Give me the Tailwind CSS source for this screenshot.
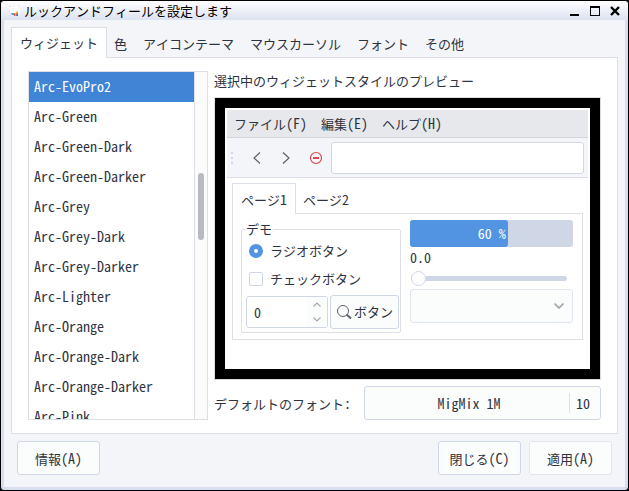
<!DOCTYPE html>
<html lang="ja">
  <head>
    <meta charset="utf-8">
    <title>ルックアンドフィールを設定します</title>
    <!-- Tailwind CSS -->
    <script src="https://cdn.jsdelivr.net/npm/@tailwindcss/browser@4"></script>
  </head>
  <body class="bg-black font-['Noto_Sans_Mono_CJK_JP','Noto_Sans_CJK_JP',monospace] text-[13px] leading-5 text-[#2e3340]">
    <!-- Window -->
    <div class="min-h-screen border border-black bg-[#d9dff1] rounded-sm flex flex-col px-[3px] pb-[3px]">
      <!-- Title bar -->
      <header class="-mx-[3px] h-[19px] pl-2 pr-2 flex items-center rounded-t-sm bg-linear-to-b from-white to-[#dde2f2] text-black">
        <svg class="size-3 mr-[3px]" viewBox="0 0 12 12" aria-hidden="true">
          <path d="M0 1h11v5q0 4-3 5H4Q0 8 0 1z" fill="#fff"/>
          <path d="M0 1h2v1H0zM4 1h1v1H4zM9 1h2v1H9zM0 5h1v2H0z" fill="#e9e4d8"/>
          <path d="M2 8h3l-1 2H3z" fill="#38a5e8"/>
          <path d="M4 9l2-1 1 2-2 1z" fill="#d9482f"/>
          <path d="M6 9l2-3 1 1-1 4H6z" fill="#f2a43c"/>
          <path d="M8 8h1v3H7z" fill="#3f74d8"/>
        </svg>
        <h1 class="flex-1 whitespace-nowrap leading-[18px]">ルックアンドフィールを設定します</h1>
        <div class="flex items-center gap-[10px]">
          <button type="button" aria-label="最小化"><svg class="size-[10px] block" viewBox="0 0 10 10"><path d="M0 8h9v2H0z"/></svg></button>
          <button type="button" aria-label="最大化"><svg class="size-[10px] block" viewBox="0 0 10 10"><path d="M0 0h10v10H0zM1 2v7h8V2z" fill-rule="evenodd"/></svg></button>
          <button type="button" aria-label="ウィンドウを閉じる"><svg class="size-[10px] block" viewBox="0 0 10 10"><path d="M1 1l8 8M9 1l-8 8" stroke="#000" stroke-width="2.4"/></svg></button>
        </div>
      </header>

      <main class="flex-1 flex flex-col bg-[#f4f5f8] pt-[7px] px-[7px] pb-3">
        <!-- Tabs -->
        <div role="tablist" class="flex h-[30px] whitespace-nowrap">
          <button type="button" role="tab" aria-selected="true" class="relative z-10 -mb-px border border-b-0 border-[#dcdfe6] bg-white px-2">ウィジェット</button>
          <button type="button" role="tab" class="pl-[7px] pr-2 pt-1">色</button>
          <button type="button" role="tab" class="px-2 pt-1">アイコンテーマ</button>
          <button type="button" role="tab" class="px-2 pt-1">マウスカーソル</button>
          <button type="button" role="tab" class="px-2 pt-1">フォント</button>
          <button type="button" role="tab" class="px-2 pt-1">その他</button>
        </div>

        <div role="tabpanel" class="flex-1 flex gap-[6px] border border-[#dcdfe6] bg-white px-4 py-[13px]">
          <!-- Theme list -->
          <div class="w-[180px] shrink-0 flex border border-[#dcdfe6]">
            <ul role="listbox" aria-label="ウィジェットスタイル" class="flex-1 h-0 min-h-full overflow-hidden text-[14px] leading-7 *:px-[5px] *:pb-[2px]">
              <li role="option" aria-selected="true" class="bg-[#4084d6] text-white">Arc-EvoPro2</li>
              <li role="option">Arc-Green</li>
              <li role="option">Arc-Green-Dark</li>
              <li role="option">Arc-Green-Darker</li>
              <li role="option">Arc-Grey</li>
              <li role="option">Arc-Grey-Dark</li>
              <li role="option">Arc-Grey-Darker</li>
              <li role="option">Arc-Lighter</li>
              <li role="option">Arc-Orange</li>
              <li role="option">Arc-Orange-Dark</li>
              <li role="option">Arc-Orange-Darker</li>
              <li role="option">Arc-Pink</li>
            </ul>
            <div class="w-[13px] border-l border-[#dcdfe6] bg-[#fbfbfc] pt-[101px] pl-[3px]">
              <div class="w-[6px] h-[67px] rounded-full bg-[#b8babf]"></div>
            </div>
          </div>

          <div class="flex-1 flex flex-col">
            <h2 class="mb-[6px]">選択中のウィジェットスタイルのプレビュー</h2>
            <!-- Preview -->
            <section aria-label="プレビュー" class="flex-1 border border-[#dcdcdc] bg-black p-[10px] flex">
              <div class="flex-1 bg-white p-[2px] pb-[29px]">
                <nav class="h-7 border-b border-[#d3d5db] bg-[#e7e8eb] flex items-center gap-[14px] px-[7px]">
                  <button type="button">ファイル<span class="text-[14px]">(F)</span></button>
                  <button type="button">編集<span class="text-[14px]">(E)</span></button>
                  <button type="button">ヘルプ<span class="text-[14px]">(H)</span></button>
                </nav>
                <div class="h-10 border-b border-[#dcdfe6] bg-[#f4f5f8] flex items-center pl-1 pr-1">
                  <svg class="w-[2px] h-3 mr-4" viewBox="0 0 2 12" fill="#cfd6e6" aria-hidden="true"><path d="M0 0h2v2H0zM0 5h2v2H0zM0 10h2v2H0z"/></svg>
                  <button type="button" aria-label="戻る"><svg class="size-4 block" viewBox="0 0 16 16" fill="none" stroke="#5c616c" stroke-width="1.2"><path d="M11 2.500L5 8l6 5.500"/></svg></button>
                  <button type="button" aria-label="進む" class="ml-[14px]"><svg class="size-4 block" viewBox="0 0 16 16" fill="none" stroke="#5c616c" stroke-width="1.2"><path d="M4 2.500L10 8l-6 5.500"/></svg></button>
                  <button type="button" aria-label="中止" class="ml-[13px]"><svg class="size-4 block" viewBox="0 0 16 16" fill="none" stroke="#da4453" stroke-width="1.2"><circle cx="8" cy="8" r="5.500"/><path d="M5 8h6" stroke-width="2"/></svg></button>
                  <input type="text" aria-label="アドレス" class="ml-[7px] min-w-0 flex-1 h-8 rounded-[3px] border border-[#cfd6e6] bg-white px-2">
                </div>

                <div class="pt-[5px] px-[5px]">
                  <div role="tablist" class="flex h-[30px]">
                    <button type="button" role="tab" aria-selected="true" class="relative z-10 -mb-px border border-b-0 border-[#dcdfe6] bg-white px-2">ページ<span class="text-[14px]">1</span></button>
                    <button type="button" role="tab" class="px-[7px] pt-[2px]">ページ<span class="text-[14px]">2</span></button>
                  </div>
                  <div role="tabpanel" class="flex gap-[9px] border border-[#dcdfe6] pt-[5px] pb-[6px] pl-2 pr-[9px]">
                    <fieldset class="w-[160px] h-[114px] shrink-0 rounded-[2px] border border-[#dcdfe6] pl-[4px] pr-px">
                      <legend class="px-px -ml-px">デモ</legend>
                      <label class="flex items-center gap-[7px] h-6 pl-[3px]">
                        <input type="radio" name="demo" checked class="appearance-none size-[14px] rounded-full border-5 border-[#5294e2] bg-white">ラジオボタン
                      </label>
                      <label class="flex items-center gap-[7px] h-8 pl-[3px]">
                        <input type="checkbox" class="appearance-none size-[14px] rounded-[2px] border border-[#cfd6e6] bg-white">チェックボタン
                      </label>
                      <div class="flex items-center gap-[2px]">
                        <div class="w-[82px] h-8 flex rounded-[3px] border border-[#cfd6e6] overflow-hidden">
                          <input type="text" value="0" aria-label="数値" class="flex-1 min-w-0 pl-[7px] text-[14px]">
                          <div class="w-5 bg-[#fbfcfc] flex flex-col items-center justify-around">
                            <button type="button" aria-label="増やす"><svg class="w-2 h-[5px] block" viewBox="0 0 8 5" fill="none" stroke="#a5a8ae" stroke-width="1.2"><path d="M.500 4.500L4 1l3.500 3.500"/></svg></button>
                            <button type="button" aria-label="減らす"><svg class="w-2 h-[5px] block" viewBox="0 0 8 5" fill="none" stroke="#a5a8ae" stroke-width="1.2"><path d="M.500.500L4 4 7.500.500"/></svg></button>
                          </div>
                        </div>
                        <button type="button" class="flex-1 h-[34px] flex items-center justify-center gap-[2px] rounded-[3px] border border-[#cfd6e6] bg-[#fbfcfc] whitespace-nowrap">
                          <svg class="size-4 shrink-0" viewBox="0 0 16 16" fill="none" stroke="#5c616c" aria-hidden="true"><circle cx="7" cy="7" r="5.500"/><path d="M10.500 10.500l4.500 4" stroke-width="2"/></svg>ボタン
                        </button>
                      </div>
                    </fieldset>
                    <div class="flex-1 min-w-0 pt-px">
                      <div role="progressbar" aria-valuenow="60" aria-valuemin="0" aria-valuemax="100" class="h-[27px] rounded-[3px] bg-[#cfd6e6]">
                        <div class="h-full rounded-[3px] bg-[#5294e2] text-white text-[14px] leading-[27px] text-right pr-[2px]" style="width: 60%">60 %</div>
                      </div>
                      <label for="scale" class="block text-[14px] leading-5">0.0</label>
                      <input id="scale" type="range" min="0" max="1" value="0" class="appearance-none block ml-px w-[156px] h-[22px] bg-transparent [&::-webkit-slider-runnable-track]:h-[5px] [&::-webkit-slider-runnable-track]:rounded-full [&::-webkit-slider-runnable-track]:bg-[#cfd6e6] [&::-webkit-slider-thumb]:appearance-none [&::-webkit-slider-thumb]:size-[15px] [&::-webkit-slider-thumb]:-mt-[5px] [&::-webkit-slider-thumb]:rounded-full [&::-webkit-slider-thumb]:border [&::-webkit-slider-thumb]:border-[#cfd6e6] [&::-webkit-slider-thumb]:bg-white">
                      <div class="grid">
                        <select aria-label="選択" class="col-start-1 row-start-1 appearance-none h-[34px] rounded-[3px] border border-[#e1e5f0] bg-[#fbfcfc]"></select>
                        <svg class="col-start-1 row-start-1 self-center justify-self-end mr-[9px] w-[10px] h-[6px] pointer-events-none" viewBox="0 0 10 6" fill="none" stroke="#a9acb3" stroke-width="1.8" aria-hidden="true"><path d="M.500.500L5 5 9.500.500"/></svg>
                      </div>
                    </div>
                  </div>
                </div>
              </div>
            </section>

            <!-- Default font -->
            <div class="flex items-center justify-between mt-[6px]">
              <label for="font" class="whitespace-nowrap">デフォルトのフォント<span class="text-[14px]">:</span></label>
              <button id="font" type="button" class="w-[237px] h-[34px] flex items-center rounded-[3px] border border-[#cfd6e6] bg-[#fbfcfc] text-[14px]">
                <span class="flex-1 pl-1">MigMix 1M</span>
                <span class="border-l border-[#dcdfe6] pl-[6px] pr-[10px]">10</span>
              </button>
            </div>
          </div>
        </div>

        <!-- Actions -->
        <footer class="flex gap-2 mt-[7px] px-[6px]">
          <button type="button" class="mr-auto w-[83px] h-[34px] rounded-[3px] border border-[#cfd6e6] bg-[#fbfcfc]">情報<span class="text-[14px]">(A)</span></button>
          <button type="button" class="w-[83px] h-[34px] rounded-[3px] border border-[#cfd6e6] bg-[#fbfcfc]">閉じる<span class="text-[14px]">(C)</span></button>
          <button type="button" class="w-[83px] h-[34px] rounded-[3px] border border-[#e1e5f0] bg-[#fbfcfc]">適用<span class="text-[14px]">(A)</span></button>
        </footer>
      </main>
    </div>
  </body>
</html>
